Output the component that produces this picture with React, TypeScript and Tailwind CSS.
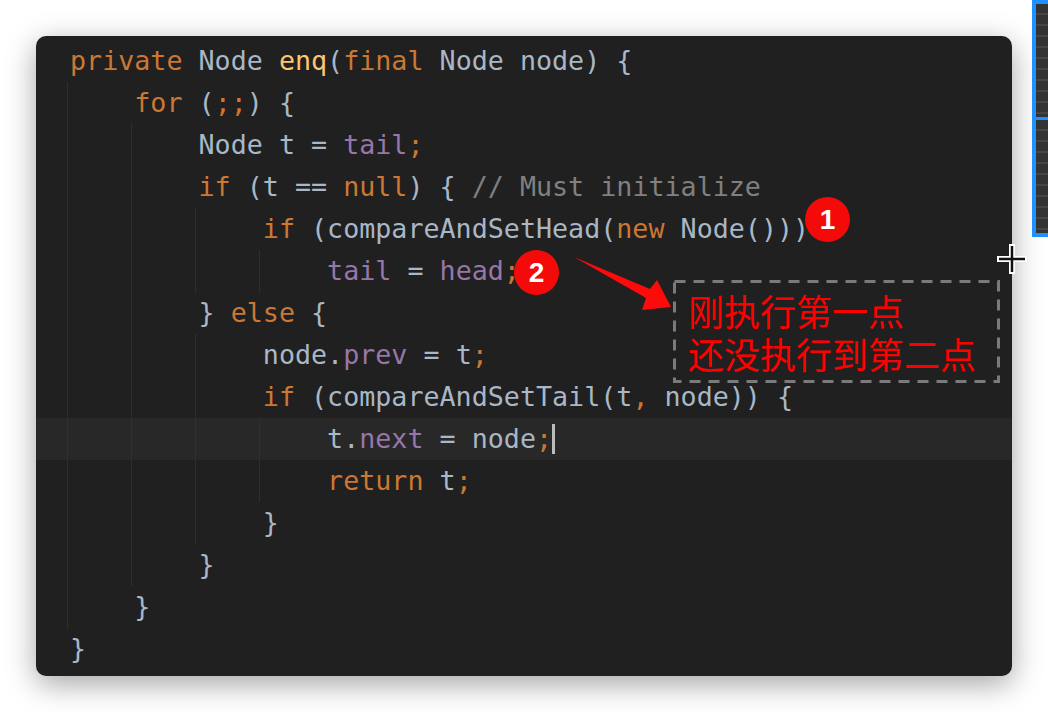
import React from 'react';

type Tok = [string, string];

const K = 'text-[#cc7832]';
const T = 'text-[#a9b7c6]';
const P = 'text-[#9876aa]';
const F = 'text-[#ffc66d]';
const C = 'text-[#808080]';

// each line: indent (chars), tokens, guide levels shown on that line
const lines: { indent: number; toks: Tok[]; guides: number[]; active?: boolean }[] = [
  { indent: 0, guides: [], toks: [[K, 'private '], [T, 'Node '], [F, 'enq'], [T, '('], [K, 'final '], [T, 'Node node) {']] },
  { indent: 4, guides: [0], toks: [[K, 'for '], [T, '('], [K, ';;'], [T, ') {']] },
  { indent: 8, guides: [0, 1], toks: [[T, 'Node t = '], [P, 'tail'], [K, ';']] },
  { indent: 8, guides: [0, 1], toks: [[K, 'if '], [T, '(t == '], [K, 'null'], [T, ') { '], [C, '// Must initialize']] },
  { indent: 12, guides: [0, 1, 2], toks: [[K, 'if '], [T, '(compareAndSetHead('], [K, 'new '], [T, 'Node()))']] },
  { indent: 16, guides: [0, 1, 2, 3], toks: [[P, 'tail'], [T, ' = '], [P, 'head'], [K, ';']] },
  { indent: 8, guides: [0, 1], toks: [[T, '} '], [K, 'else '], [T, '{']] },
  { indent: 12, guides: [0, 1, 2], toks: [[T, 'node.'], [P, 'prev'], [T, ' = t'], [K, ';']] },
  { indent: 12, guides: [0, 1, 2], toks: [[K, 'if '], [T, '(compareAndSetTail(t'], [K, ', '], [T, 'node)) {']] },
  { indent: 16, guides: [0, 1, 2, 3], active: true, toks: [[T, 't.'], [P, 'next'], [T, ' = node'], [K, ';']] },
  { indent: 16, guides: [0, 1, 2, 3], toks: [[K, 'return '], [T, 't'], [K, ';']] },
  { indent: 12, guides: [0, 1, 2], toks: [[T, '}']] },
  { indent: 8, guides: [0, 1], toks: [[T, '}']] },
  { indent: 4, guides: [0], toks: [[T, '}']] },
  { indent: 0, guides: [], toks: [[T, '}']] },
];

const guideLeft = ['left-[31px]', 'left-[95px]', 'left-[159px]', 'left-[223px]'];

const Badge = ({ n, className }: { n: string; className: string }) => (
  <div
    className={`absolute flex items-center justify-center rounded-full bg-[#f50a0a] text-white text-[28px] font-bold w-[45px] h-[45px] ${className}`}
    style={{ fontFamily: '"Liberation Sans", Arial, sans-serif' }}
  >
    {n}
  </div>
);

export default function App() {
  return (
    <div className="relative w-[1048px] h-[712px] overflow-hidden bg-white">
      <div className="ml-[36px] mt-[36px] w-[976px] h-[640px] rounded-[10px] bg-[#202020] shadow-[0_8px_30px_rgba(0,0,0,0.36)] pt-[4px] overflow-hidden">
        <div
          className="text-[26.7px] leading-[42px] whitespace-pre"
          style={{ fontFamily: '"DejaVu Sans Mono", "Liberation Mono", monospace' }}
        >
          {lines.map((ln, i) => (
            <div key={i} className={`relative h-[42px] pl-[34px] ${ln.active ? 'bg-[#282828]' : ''}`}>
              {ln.guides.map((g) => (
                <div key={g} className={`absolute top-0 bottom-0 w-px bg-[#2f2f2f] ${guideLeft[g]}`} />
              ))}
              <span>{' '.repeat(ln.indent)}</span>
              {ln.toks.map(([cls, txt], j) => (
                <span key={j} className={cls}>
                  {txt}
                </span>
              ))}
              {ln.active && <span className="inline-block w-[3px] h-[30px] bg-[#bbbbbb] align-middle -mt-[4px]" />}
            </div>
          ))}
        </div>
      </div>

      {/* annotations */}
      <Badge n="1" className="left-[805px] top-[197px]" />
      <Badge n="2" className="left-[514px] top-[250px]" />

      <svg className="absolute left-0 top-0" width="1048" height="712" viewBox="0 0 1048 712">
        <polygon points="574,257 650,289 657,280 671,307 642,310 646,298" fill="#ff0a0a" />
        <rect x="674.5" y="281.5" width="324" height="100" fill="none" stroke="#7a7a7a" strokeWidth="3" strokeDasharray="11 8" />
      </svg>

      <div
        className="absolute left-[688px] top-[289px] text-[#ff0000] text-[36px] leading-[43px]"
        style={{ fontFamily: '"Noto Sans CJK SC", "Noto Sans", sans-serif' }}
      >
        刚执行第一点
        <br />
        还没执行到第二点
      </div>

      {/* side panel edge */}
      <div className="absolute left-[1032px] top-0 w-[24px] h-[237px] border-[4px] border-[#1e90ff] bg-[#333333] flex flex-col">
        <div className="flex-1 bg-[repeating-linear-gradient(180deg,#333_0px,#333_9px,#454545_9px,#454545_11px)]" />
        <div className="h-[3px] bg-[#1e90ff]" />
        <div className="flex-1 bg-[repeating-linear-gradient(180deg,#333_0px,#333_9px,#454545_9px,#454545_11px)]" />
      </div>

      {/* crosshair cursor */}
      <svg className="absolute left-[996px] top-[243px]" width="32" height="32" viewBox="0 0 32 32">
        <path d="M16 1 V31 M1 16 H31" stroke="#ffffff" strokeWidth="6" />
        <path d="M16 3 V29 M3 16 H29" stroke="#111111" strokeWidth="2.5" />
      </svg>
    </div>
  );
}
